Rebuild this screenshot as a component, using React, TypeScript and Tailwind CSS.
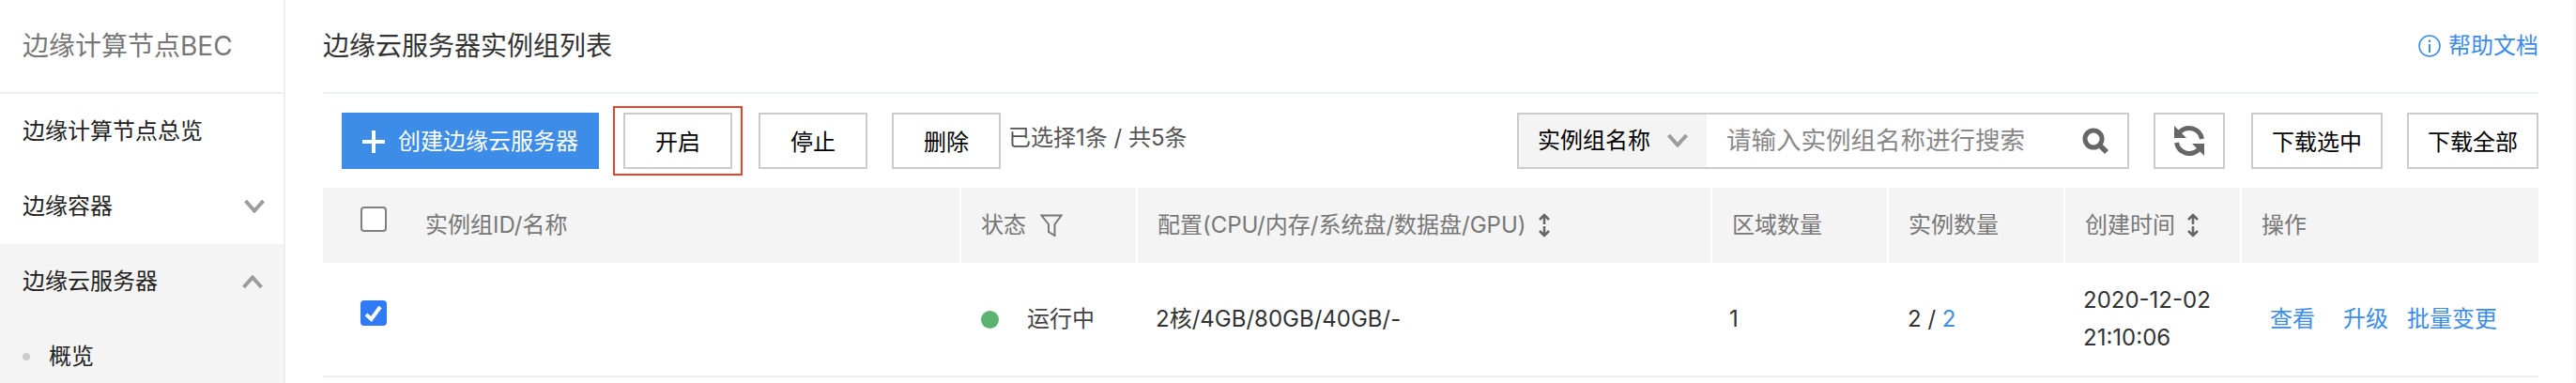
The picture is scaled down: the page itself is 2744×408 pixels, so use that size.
const FONT = "font-['Inter','Noto_Sans_CJK_SC',sans-serif]";

type Col = { label: string; width: string; filter?: boolean; sort?: boolean };

const COLS: Col[] = [
  { label: "状态", width: "w-[186px]", filter: true },
  { label: "配置(CPU/内存/系统盘/数据盘/GPU)", width: "w-[610px]", sort: true },
  { label: "区域数量", width: "w-[186px]" },
  { label: "实例数量", width: "w-[186px]" },
  { label: "创建时间", width: "w-[186px]", sort: true },
];

function Chevron({ up }: { up?: boolean }) {
  return (
    <svg width="22" height="14" viewBox="0 0 22 14" fill="none" stroke="#9c9c9c" strokeWidth="4">
      <path d={up ? "M1.5 13 L11 2.5 L20.5 13" : "M1.5 1 L11 11.5 L20.5 1"} />
    </svg>
  );
}

function SortIcon() {
  return (
    <svg className="ml-[12px]" width="14" height="26" viewBox="0 0 14 26" fill="none" stroke="#666666" strokeWidth="2.5">
      <path d="M7 2 V12 M2 7 L7 2 L12 7" />
      <path d="M7 14 V24 M2 19 L7 24 L12 19" />
    </svg>
  );
}

function Btn({ label, className = "" }: { label: string; className?: string }) {
  return (
    <button className={`flex h-[60px] w-[116px] items-center justify-center border-2 border-[#cccccc] bg-white pt-[3px] text-[24px] text-black ${className}`}>
      {label}
    </button>
  );
}

function Sidebar() {
  return (
    <aside className="h-[408px] w-[304px] shrink-0 overflow-hidden border-r-2 border-[#eeeeee]">
      <div className="flex h-[100px] items-center border-b-2 border-[#eeeeee] pl-[24px] text-[28px] text-[#777777]">
        边缘计算节点BEC
      </div>
      <div className="flex h-[80px] items-center pl-[24px] text-[24px] text-[#222222]">边缘计算节点总览</div>
      <div className="flex h-[80px] items-center justify-between pl-[24px] pr-[20px] text-[24px] text-[#222222]">
        边缘容器
        <Chevron />
      </div>
      <div className="bg-[#f4f4f4]">
        <div className="flex h-[80px] items-center justify-between pl-[24px] pr-[22px] text-[24px] text-[#222222]">
          边缘云服务器
          <Chevron up />
        </div>
        <div className="flex h-[80px] items-center pl-[24px] text-[24px] text-[#222222]">
          <span className="mr-[20px] h-[8px] w-[8px] rounded-full bg-[#cccccc]" />
          概览
        </div>
      </div>
    </aside>
  );
}

function Toolbar() {
  return (
    <div className="flex h-[100px] items-start justify-between pl-[20px] pt-[20px]">
      <div className="flex items-start">
        <button className="flex h-[60px] w-[274px] items-center gap-[14px] bg-[#3d8ce8] pl-[22px] pt-[2px] text-[24px] text-white">
          <svg width="24" height="24" viewBox="0 0 24 24" fill="#ffffff">
            <path d="M10 0h4v10h10v4H14v10h-4V14H0v-4h10z" />
          </svg>
          创建边缘云服务器
        </button>
        {/* red highlight round 开启 */}
        <div className="relative ml-[26px]">
          <Btn label="开启" />
          <span className="pointer-events-none absolute -inset-x-[11px] -inset-y-[7px] border-2 border-[#e8432c]" />
        </div>
        <Btn label="停止" className="ml-[28px]" />
        <Btn label="删除" className="ml-[26px]" />
        <span className="ml-[8px] text-[24px] leading-[54px] text-[#555555]">已选择1条 / 共5条</span>
      </div>
      <div className="flex items-start">
        <div className="flex h-[60px] w-[652px] border-2 border-[#cccccc]">
          <div className="flex w-[200px] items-center justify-between bg-[#f4f4f4] pl-[20px] pr-[20px] text-[24px] text-black">
            实例组名称
            <Chevron />
          </div>
          <div className="flex flex-1 items-center justify-between pl-[21px] pr-[20px] text-[26.5px] text-[#888888]">
            请输入实例组名称进行搜索
            <svg width="28" height="28" viewBox="0 0 28 28" fill="none" stroke="#666666">
              <circle cx="12" cy="12" r="9" strokeWidth="5" />
              <path d="M18 18 L26 26" strokeWidth="5.5" />
            </svg>
          </div>
        </div>
        <button className="ml-[26px] flex h-[60px] w-[76px] items-center justify-center border-2 border-[#cccccc]">
          <svg width="34" height="34" viewBox="0 0 34 34" fill="none" stroke="#666666" strokeWidth="5">
            <path d="M30.5 15 A14 14 0 0 0 7 7.5" />
            <path d="M3.5 19 A14 14 0 0 0 27 26.5" />
            <path d="M1 1 L1 14 L14 14 Z" fill="#666666" stroke="none" />
            <path d="M33 33 L33 20 L20 20 Z" fill="#666666" stroke="none" />
          </svg>
        </button>
        <Btn label="下载选中" className="ml-[28px] w-[140px]" />
        <Btn label="下载全部" className="ml-[26px] w-[140px]" />
      </div>
    </div>
  );
}

function Checkbox({ checked }: { checked?: boolean }) {
  if (checked) {
    return (
      <span className="mb-[13px] flex h-[27px] w-[28px] items-center justify-center rounded-[4px] bg-[#2f7bf6]">
        <svg width="20" height="18" viewBox="0 0 20 18" fill="none" stroke="#ffffff" strokeWidth="4">
          <path d="M2 10 L7.5 15 L17 2" />
        </svg>
      </span>
    );
  }
  return <span className="mb-[13px] h-[27px] w-[28px] rounded-[4px] border-2 border-[#808080] bg-white" />;
}

function Table() {
  return (
    <div>
      <div className="flex h-[80px] text-[24px] text-[#777777]">
        <div className="flex w-[678px] items-center bg-[#f4f4f4] pl-[40px]">
          <Checkbox />
          <span className="ml-[41px]">实例组ID/名称</span>
        </div>
        {COLS.map((c) => (
          <div key={c.label} className={`ml-[2px] flex items-center bg-[#f4f4f4] pl-[21px] ${c.width}`}>
            {c.label}
            {c.filter && (
              <svg className="ml-[15px]" width="24" height="24" viewBox="0 0 24 24" fill="none" stroke="#777777" strokeWidth="2">
                <path d="M1.5 1.5 H22.5 L15.5 11 V23 L9 19 V11 Z" />
              </svg>
            )}
            {c.sort && <SortIcon />}
          </div>
        ))}
        <div className="ml-[2px] flex flex-1 items-center bg-[#f4f4f4] pl-[21px]">操作</div>
      </div>
      <div className="flex h-[122px] items-center border-b-2 border-[#eeeeee] text-[24px] text-[#333333]">
        <div className="flex w-[680px] items-center pl-[40px]">
          <Checkbox checked />
        </div>
        <div className="flex w-[188px] items-center pl-[21px]">
          <span className="h-[19px] w-[19px] rounded-full bg-[#5cb270]" />
          <span className="ml-[30px] text-[#444444]">运行中</span>
        </div>
        <div className="w-[612px] pl-[19px]">2核/4GB/80GB/40GB/-</div>
        <div className="w-[188px] pl-[18px]">1</div>
        <div className="w-[188px] pl-[20px]">
          2 / <span className="text-[#3d8ce8]">2</span>
        </div>
        <div className="w-[188px] pl-[19px] leading-[40px]">
          2020-12-02
          <br />
          21:10:06
        </div>
        <div className="flex flex-1 pl-[30px] text-[#3d8ce8]">
          <span>查看</span>
          <span className="ml-[30px]">升级</span>
          <span className="ml-[20px]">批量变更</span>
        </div>
      </div>
    </div>
  );
}

export default function App() {
  return (
    <div className={`flex h-[408px] w-[2744px] overflow-hidden bg-white ${FONT}`}>
      <Sidebar />
      <main className="ml-[40px] w-[2360px] shrink-0">
        <div className="flex h-[100px] items-center justify-between border-b-2 border-[#eef1f4]">
          <h1 className="text-[28px] font-normal text-[#333333]">边缘云服务器实例组列表</h1>
          <a className="flex items-center text-[24px] text-[#3d8ce8]">
            <svg className="mr-[8px]" width="24" height="24" viewBox="0 0 24 24" fill="none" stroke="#3d8ce8" strokeWidth="1.6">
              <circle cx="12" cy="12" r="11" />
              <path d="M12 10 V19 M12 5.5 V8" strokeWidth="2" />
            </svg>
            帮助文档
          </a>
        </div>
        <Toolbar />
        <Table />
      </main>
      <div className="ml-[34px] flex-1 bg-gradient-to-r from-white to-[#f6f6f6]" />
    </div>
  );
}
